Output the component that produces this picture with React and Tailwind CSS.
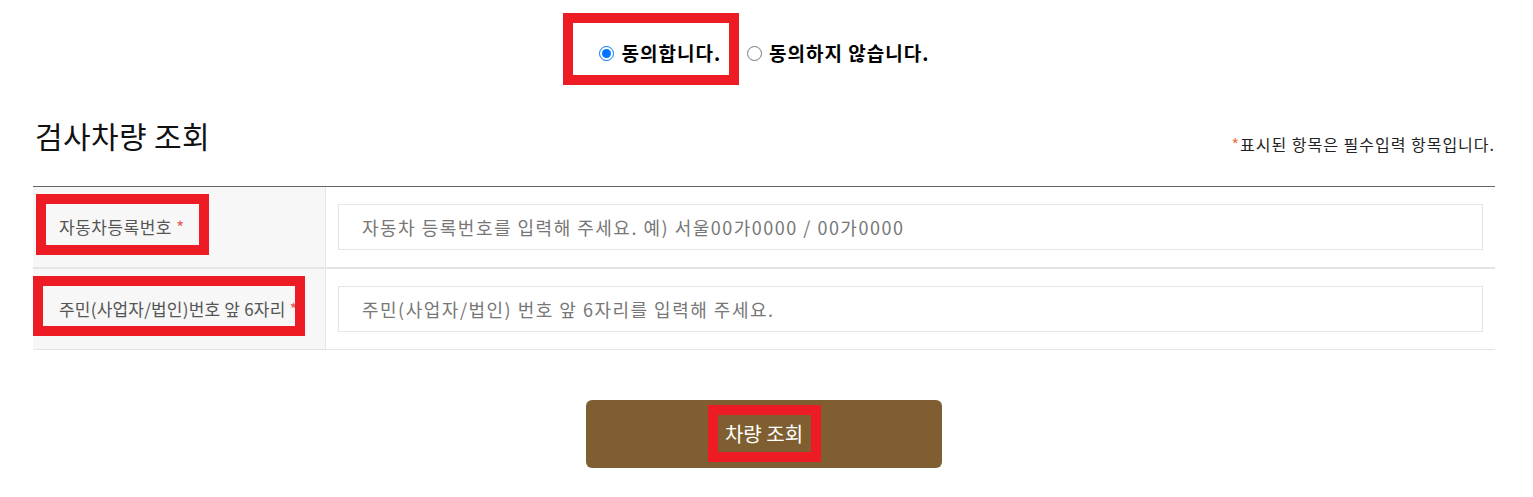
export default function App() {
  return (
    <div className="w-[1533px] h-[497px] bg-white overflow-hidden font-['Noto_Sans_CJK_KR',sans-serif]">
      <div className="ml-[33px] w-[1462px]">
        {/* agreement */}
        <div className="h-[106px] pt-[43px] flex justify-center items-start">
          <label className="relative flex items-center h-[20px] gap-[8px] text-[19px] leading-[20px] tracking-[1px] font-bold text-black">
            <input type="radio" name="agree" defaultChecked className="m-0 w-[15px] h-[15px]" />
            <span>동의합니다.</span>
            <span className="absolute left-[-36px] right-[-18px] top-[-30px] bottom-[-22px] border-[10px] border-[#ed1c24]"></span>
          </label>
          <label className="ml-[26px] flex items-center h-[20px] gap-[7px] text-[19px] leading-[20px] tracking-[1px] font-bold text-black">
            <input type="radio" name="agree" className="m-0 w-[15px] h-[15px]" />
            <span>동의하지 않습니다.</span>
          </label>
        </div>

        {/* title */}
        <div className="h-[80px] flex justify-between items-start">
          <h2 className="mt-[11px] ml-[2px] text-[30px] leading-[36px] tracking-[0.4px] font-normal text-[#111]">검사차량 조회</h2>
          <p className="mt-[28px] text-[16px] leading-[20px] tracking-[1px] text-[#222]">
            <span className="text-[#e8763c]">*</span>표시된 항목은 필수입력 항목입니다.
          </p>
        </div>

        {/* table */}
        <div className="border-t border-[#666]">
          <div className="flex h-[80px] border-b-2 border-[#e5e5e5] box-content">
            <div className="relative w-[293px] shrink-0 bg-[#f7f7f7] border-r border-[#e5e5e5] pl-[26px] flex items-center text-[17px] tracking-[0.5px] text-[#555]">
              <span>
                자동차등록번호 <span className="text-[#e35d5d]">*</span>
              </span>
              <span className="absolute left-[3px] top-[7px] w-[173px] h-[61px] border-[10px] border-[#ed1c24]"></span>
            </div>
            <div className="flex-1 px-[12px] flex items-center">
              <input
                type="text"
                placeholder="자동차 등록번호를 입력해 주세요. 예) 서울00가0000 / 00가0000"
                className="w-full h-[46px] border border-[#e5e5e5] px-[23px] text-[18px] tracking-[1.5px] text-[#333] placeholder:text-[#777] outline-none"
              />
            </div>
          </div>
          <div className="flex h-[80px] border-b border-[#e5e5e5] box-content">
            <div className="relative w-[293px] shrink-0 bg-[#f7f7f7] border-r border-[#e5e5e5] pl-[26px] flex items-center text-[17px] tracking-[0.2px] text-[#555] overflow-hidden whitespace-nowrap">
              <span>
                주민(사업자/법인)번호 앞 6자리 <span className="text-[#e35d5d]">*</span>
              </span>
              <span className="absolute left-[0px] top-[7px] w-[272px] h-[60px] border-[10px] border-[#ed1c24]"></span>
            </div>
            <div className="flex-1 px-[12px] flex items-center">
              <input
                type="text"
                placeholder="주민(사업자/법인) 번호 앞 6자리를 입력해 주세요."
                className="w-full h-[46px] border border-[#e5e5e5] px-[23px] text-[18px] tracking-[1.5px] text-[#333] placeholder:text-[#777] outline-none"
              />
            </div>
          </div>
        </div>

        {/* button */}
        <div className="mt-[50px] flex justify-center">
          <button className="relative w-[356px] h-[68px] rounded-[6px] bg-[#7f5f32] text-white text-[20px] flex items-center justify-center">
            차량 조회
            <span className="absolute left-[122px] top-[5px] w-[113px] h-[57px] border-[10px] border-[#ed1c24]"></span>
          </button>
        </div>
      </div>
    </div>
  );
}
